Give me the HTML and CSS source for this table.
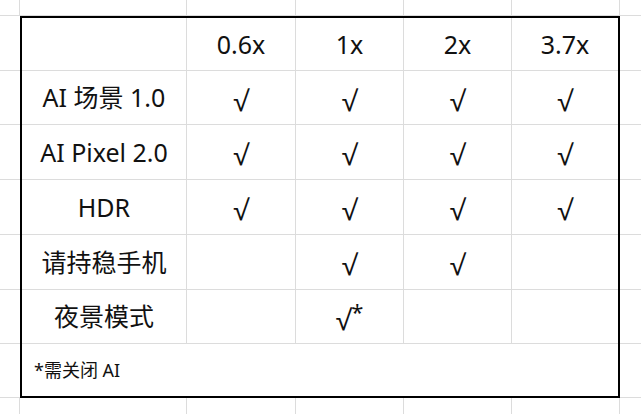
FILE: index.html
```html
<!DOCTYPE html>
<html lang="zh">
<head>
<meta charset="utf-8">
<title>Camera modes</title>
<link rel="stylesheet" href="styles.css">
</head>
<body>
<div class="sheet">
  <div class="table">
    <div class="c"></div>
    <div class="c">0.6x</div>
    <div class="c">1x</div>
    <div class="c">2x</div>
    <div class="c last">3.7x</div>

    <div class="c">AI 场景 1.0</div>
    <div class="c chk">√</div>
    <div class="c chk">√</div>
    <div class="c chk">√</div>
    <div class="c chk last">√</div>

    <div class="c">AI Pixel 2.0</div>
    <div class="c chk">√</div>
    <div class="c chk">√</div>
    <div class="c chk">√</div>
    <div class="c chk last">√</div>

    <div class="c">HDR</div>
    <div class="c chk">√</div>
    <div class="c chk">√</div>
    <div class="c chk">√</div>
    <div class="c chk last">√</div>

    <div class="c">请持稳手机</div>
    <div class="c chk"></div>
    <div class="c chk">√</div>
    <div class="c chk">√</div>
    <div class="c chk last"></div>

    <div class="c">夜景模式</div>
    <div class="c chk"></div>
    <div class="c chk">√<span class="star">*</span></div>
    <div class="c chk"></div>
    <div class="c chk last"></div>

    <div class="note">*需关闭 AI</div>
  </div>

  <div class="m t"></div><div class="m t"></div><div class="m t"></div><div class="m t"></div><div class="m t"></div><div class="m t"></div><div class="m t end"></div>
  <div class="m side"></div><div class="m side"></div>
  <div class="m side"></div><div class="m side"></div>
  <div class="m side"></div><div class="m side"></div>
  <div class="m side"></div><div class="m side"></div>
  <div class="m side"></div><div class="m side"></div>
  <div class="m side"></div><div class="m side"></div>
  <div class="m side"></div><div class="m side"></div>
  <div class="m b"></div><div class="m b"></div><div class="m b"></div><div class="m b"></div><div class="m b"></div><div class="m b"></div><div class="m b end"></div>
</div>
</body>
</html>
```

FILE: styles.css
```css
html, body {
  margin: 0;
  padding: 0;
  background: #ffffff;
  overflow: hidden;
}

.sheet {
  width: 641px;
  height: 414px;
  display: grid;
  grid-template-columns: 20px 167px 109px 108px 108px 108px 1fr;
  grid-template-rows: 16px 55px 54px 55px 55px 55px 54px 54px 1fr;
  font-family: "Noto Sans", "Noto Sans CJK SC", sans-serif;
  color: #111111;
}

.m {
  box-sizing: border-box;
}

.m.t {
  border-right: 1px solid #dcdcdc;
  border-bottom: 1px solid #dcdcdc;
}

.m.side {
  border-bottom: 1px solid #dcdcdc;
}

.m.b {
  border-right: 1px solid #dcdcdc;
}

.m.end {
  border-right: none;
}

.table {
  grid-row: 2 / 9;
  grid-column: 2 / 7;
  box-sizing: border-box;
  border: 2px solid #000000;
  display: grid;
  grid-template-columns: 165px 109px 108px 108px 1fr;
  grid-template-rows: 53px 54px 55px 55px 55px 54px 1fr;
}

.c {
  box-sizing: border-box;
  border-right: 1px solid #dcdcdc;
  border-bottom: 1px solid #dcdcdc;
  display: flex;
  align-items: center;
  justify-content: center;
  font-size: 25px;
  line-height: 1;
  white-space: nowrap;
}

.c.last {
  border-right: none;
}

.chk {
  font-family: "Open Sans", sans-serif;
  font-size: 28px;
  padding-top: 4px;
}

.star {
  font-family: "Noto Sans", sans-serif;
  font-size: 22px;
  position: relative;
  top: -8px;
}

.note {
  grid-column: 1 / 6;
  display: flex;
  align-items: center;
  padding-left: 12px;
  font-size: 18px;
  line-height: 1;
}
```
